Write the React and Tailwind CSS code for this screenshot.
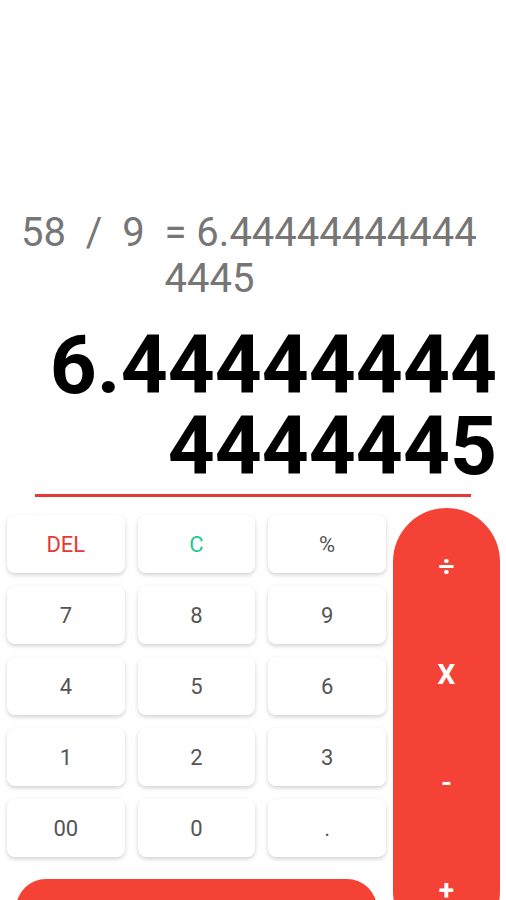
import React from 'react';

const rows = [
  [{ label: 'DEL', color: 'text-[#e53935]' }, { label: 'C', color: 'text-[#1cc992]' }, { label: '%' }],
  [{ label: '7' }, { label: '8' }, { label: '9' }],
  [{ label: '4' }, { label: '5' }, { label: '6' }],
  [{ label: '1' }, { label: '2' }, { label: '3' }],
  [{ label: '00' }, { label: '0' }, { label: '.' }],
];

const ops = ['÷', 'X', '-', '+'];

function Key({ label, color }) {
  return (
    <button className="h-[58px] rounded-[8px] bg-white shadow-[0_2px_4px_rgba(0,0,0,0.18)] flex items-center justify-center">
      <span className={`text-[22px] ${color || 'text-[#555555]'}`}>{label}</span>
    </button>
  );
}

export default function App() {
  return (
    <div className="h-[900px] overflow-hidden bg-white font-['Roboto',sans-serif]">
      {/* expression */}
      <div className="pt-[210px] pl-[21px] flex text-[40px] leading-[46px] text-[#767676]">
        <span className="whitespace-pre">{'58  /  9  '}</span>
        <div className="whitespace-pre">
          <div>= 6.44444444444</div>
          <div>4445</div>
        </div>
      </div>

      {/* result */}
      <div className="mt-[23px] pr-[9px] text-right text-[82px] leading-[81px] font-bold text-black">
        <div>6.44444444</div>
        <div>4444445</div>
      </div>

      <div className="mt-[7px] mx-[35px] h-[3px] bg-[#e53935]" />

      {/* keypad */}
      <div className="mt-[11px] flex pl-[7px] pr-[6px] gap-[7px]">
        <div className="flex-1 flex flex-col pt-[7px]">
          <div className="grid grid-cols-3 gap-x-[13px] gap-y-[13px]">
            {rows.flat().map((k, i) => (
              <Key key={i} label={k.label} color={k.color} />
            ))}
          </div>
          <button className="mt-[22px] ml-[9px] mr-[9px] h-[62px] rounded-[30px] bg-[#f44336] text-white text-[30px] font-bold">
            =
          </button>
        </div>
        <div className="w-[107px] shrink-0 rounded-[54px] bg-[#f44336] flex flex-col pt-[5px]">
          {ops.map((o) => (
            <button key={o} className="h-[108px] shrink-0 flex items-center justify-center text-white text-[28px] font-bold">
              {o}
            </button>
          ))}
        </div>
      </div>
    </div>
  );
}
